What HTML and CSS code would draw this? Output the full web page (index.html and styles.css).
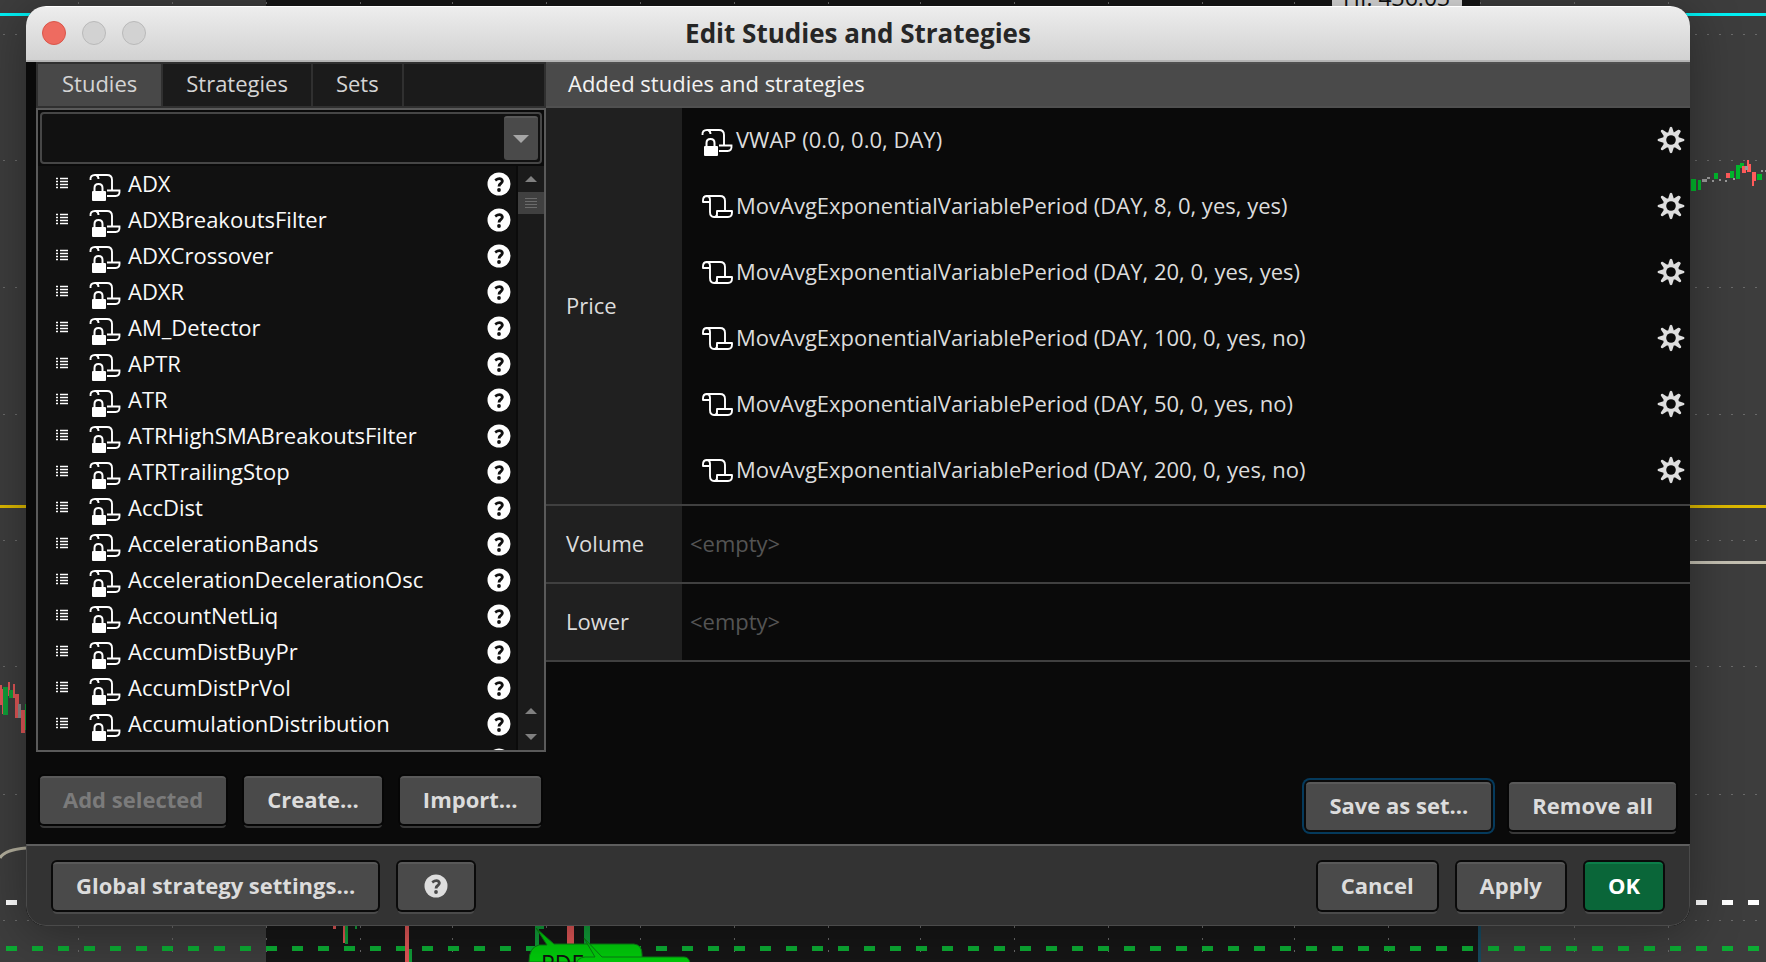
FILE: index.html
```html
<!DOCTYPE html>
<html lang="en">
<head>
<meta charset="utf-8">
<title>Edit Studies and Strategies</title>
<link rel="stylesheet" href="styles.css">
</head>
<body>
<svg class="chart" aria-hidden="true" width="1766" height="962" viewBox="0 0 1766 962">
  <rect width="1766" height="962" fill="#3d3d3d"/>
  <rect x="266" width="1214" height="962" fill="#161616"/>
  <g stroke="#6a6a6a" stroke-width="1" stroke-dasharray="2 10">
    <path d="M2 34.5H1766M2 160.5H1766M2 287.5H1766M2 414.5H1766M2 540.5H1766M2 666.5H1766M2 794.5H1766M2 920.5H1766" stroke-dashoffset="-1"/>
    <path d="M78.500 2V962M172.500 2V962M266.500 2V962M360.500 2V962M452.500 2V962M546.500 2V962M640.500 2V962M734.500 2V962M828.500 2V962M920.500 2V962M1014.500 2V962M1108.500 2V962M1202.500 2V962M1294.500 2V962M1388.500 2V962M1480.500 2V962M1574.500 2V962M1668.500 2V962"/>
  </g>
  <path d="M0 14.500H1766" stroke="#00f0f4" stroke-width="3"/>
  <path d="M0 506.500H1766" stroke="#dcb800" stroke-width="3"/>
  <path d="M1600 562.500H1766" stroke="#c4c0b2" stroke-width="3"/>
  <path d="M0 858Q4 850 26 848" fill="none" stroke="#b4b09e" stroke-width="3"/>
  <path d="M6 902.500H1766" stroke="#fff" stroke-width="5" stroke-dasharray="11 15"/>
  <path d="M6 948.500H1766" stroke="#0cac34" stroke-width="5" stroke-dasharray="11 15"/>
  <path d="M1479.500 926V962" stroke="#174a60" stroke-width="3"/>
  <g fill="#df5656">
    <path d="M0 685h2v20H0zM2 689h3v25H2zM8 682h2v14H8zM13 684h2v10h4v20h2v4h-6v-20h-2zM21 710h4v23h-4zM333 900h3v29h-3zM343 900h2v43h-2zM405 900h4v62h-4zM567 900h7v44h-7z"/>
  </g>
  <g fill="#109c38">
    <path d="M3 687h5v28H3zM9 690h4v8H9zM25 704h2v26h-2zM345 900h3v44h-3zM355 900h2v29h-2zM409 949h3v13h-3zM535 900h4v48h-4zM539 900h5v29h-5zM584 900h6v48h-6z"/>
  </g>
  <path d="M18 704h3v14h-3z" fill="#8a8a8a"/>
  <g fill="#00b82c">
    <path d="M1691 179h5v12h-5zM1698 180h3v10h-3zM1714 173h4v6h-4zM1730 171h4v7h-4zM1736 165h4v14h-4zM1740 163h4v5h-4zM1757 174h5v6h-5z"/>
  </g>
  <g fill="#ff5a5a">
    <path d="M1726 173h4v5h-4zM1742 166h4v7h-4zM1747 160h2v4h2v8h-4zM1752 172h4v9h-2v5h-2z"/>
  </g>
  <g fill="#9a9a9a">
    <path d="M1702 179h5v3h-5zM1707 177h3v2h-3zM1712 180h2v2h-2zM1719 179h2v2h-2zM1725 180h2v2h-2zM1733 178h2v2h-2zM1745 166h3v4h-3zM1761 170h2v2h-2zM1765 170h1v2h-1z"/>
  </g>
  <path d="M536 928l11 17h-8q-10 2-10 17h113v-8q0-9-8-10H554z" fill="#00cc0a" stroke="#0a7a14"/>
  <text class="flag" x="541" y="972">PDF</text>
  <path d="M584 938l11 19h-10q-8 1-8 6h113q-1-6-6-6H602z" fill="#00cc0a" stroke="#0a7a14"/>
  <rect x="1332" y="-30" width="130" height="38" rx="3" fill="#dcdcdc"/>
  <text class="flag" x="1343" y="6">HI: 436.03</text>
</svg>

<svg class="defs" aria-hidden="true" width="0" height="0">
  <symbol id="i-list" viewBox="0 0 12 12">
    <path d="M0 1.500h2M0 4.500h2M0 7.500h2M0 10.500h2M4 1.500h8M4 4.500h8M4 7.500h8M4 10.500h8" stroke="#fff" stroke-width="1.600"/>
  </symbol>
  <symbol id="i-scroll" viewBox="0 0 32 28">
    <path d="M9 8H2V6.500Q2 2 6 2H19Q24 2 24 7V17H31V18.500Q31 23 27 23H13Q9 23 9 18V6Q9 2 5.500 2M16 22.500V17H24M14 23Q16.500 22 16 18" fill="none" stroke="#fff" stroke-width="1.900" stroke-linejoin="round"/>
  </symbol>
  <symbol id="i-locked" viewBox="0 0 32 28">
    <path d="M1.500 7Q1 2 6 2H18Q23 2 23 7V17M7 2Q9.500 3 9.500 6M18 17.500H30.500Q31 23 26.500 23H18" fill="none" stroke="#fff" stroke-width="1.900"/>
    <path d="M5.500 19V15Q5.500 11 9.500 11T13.500 15V19" fill="none" stroke="#fff" stroke-width="2"/>
    <rect x="3" y="18" width="14" height="10" rx="1" fill="#fff"/>
  </symbol>
  <symbol id="i-help" viewBox="0 0 24 24">
    <circle cx="12" cy="12" r="11.500" fill="currentColor"/>
    <path d="M8.200 8.300Q12 5.700 14.400 7.200Q16.400 9 14.300 11Q12 12.500 12 14.500" fill="none" stroke="var(--mark)" stroke-width="2.800"/>
    <circle cx="12" cy="18" r="1.900" fill="var(--mark)"/>
  </symbol>
  <symbol id="i-gear" viewBox="0 0 28 28">
    <path d="M12.800 1.500Q14 0 15.200 1.500L16.800 6.600L21.200 3.800Q23.500 3.500 23.800 5.500L21.400 9.800L21.800 11.300L27 13Q28 14 27 15L21.800 16.700L21.400 18.200L24.200 22.500Q24.500 24.500 22.500 24.200L18.200 21.400L16.800 21.600L15.200 26.500Q14 28 12.800 26.500L11.200 21.600L9.800 21.400L5.500 24.200Q3.500 24.500 3.800 22.500L6.600 18.200L6.400 16.700L1 15Q0 14 1 13L6.400 11.300L6.600 9.800L3.800 5.500Q3.500 3.500 5.500 3.800L9.800 6.600L11.200 6.600Z" fill="#dedede"/>
    <circle cx="14" cy="14" r="4.800" fill="#0a0a0a"/>
  </symbol>
</svg>

<main class="window">
  <header class="titlebar">
    <div class="lights">
      <button class="light close" aria-label="Close"></button>
      <button class="light" aria-label="Minimize"></button>
      <button class="light" aria-label="Zoom"></button>
    </div>
    <h1 class="title">Edit Studies and Strategies</h1>
  </header>

  <div class="body">
    <section class="library">
      <div class="tabs" role="tablist">
        <button class="tab active" role="tab" aria-selected="true">Studies</button>
        <button class="tab" role="tab" aria-selected="false">Strategies</button>
        <button class="tab" role="tab" aria-selected="false">Sets</button>
      </div>
      <div class="panel">
        <div class="combo">
          <input class="search" type="text" aria-label="Search studies">
          <button class="drop" aria-label="Show search history"><svg width="16" height="8" viewBox="0 0 16 8"><path d="M0 0H16L8 8Z" fill="#a6a6a6"/></svg></button>
        </div>
        <div class="browser">
          <ul class="studies" id="studies"></ul>
          <div class="scrollbar" aria-hidden="true">
            <svg class="arrow" width="12" height="6" viewBox="0 0 12 6"><path d="M0 6H12L6 0Z"/></svg>
            <div class="thumb"><svg width="12" height="12" viewBox="0 0 12 12"><path d="M0 1.500H12M0 4.500H12M0 7.500H12M0 10.500H12" stroke="#6c6c6c"/></svg></div>
            <div class="track"></div>
            <svg class="arrow" width="12" height="6" viewBox="0 0 12 6"><path d="M0 6H12L6 0Z"/></svg>
            <svg class="arrow" width="12" height="6" viewBox="0 0 12 6"><path d="M0 0H12L6 6Z"/></svg>
          </div>
        </div>
      </div>
      <div class="actions">
        <button class="btn" disabled>Add selected</button>
        <button class="btn">Create...</button>
        <button class="btn">Import...</button>
      </div>
    </section>

    <section class="added">
      <h2 class="heading">Added studies and strategies</h2>
      <div class="group">
        <h3 class="label">Price</h3>
        <ul class="entries" id="entries"></ul>
      </div>
      <div class="group">
        <h3 class="label">Volume</h3>
        <p class="empty">&lt;empty&gt;</p>
      </div>
      <div class="group">
        <h3 class="label">Lower</h3>
        <p class="empty">&lt;empty&gt;</p>
      </div>
      <div class="actions end">
        <button class="btn focused">Save as set...</button>
        <button class="btn">Remove all</button>
      </div>
    </section>
  </div>

  <footer class="footer">
    <button class="btn framed">Global strategy settings...</button>
    <button class="btn framed help-btn" aria-label="Help"><svg class="help" width="24" height="24"><use href="#i-help"/></svg></button>
    <span class="spacer"></span>
    <button class="btn framed">Cancel</button>
    <button class="btn framed">Apply</button>
    <button class="btn framed ok">OK</button>
  </footer>
</main>
<script src="app.js"></script>
</body>
</html>
```

FILE: styles.css
```css
* { box-sizing: border-box; }

body {
  margin: 0;
  height: 100vh;
  padding: 6px 76px 36px 26px;
  display: flex;
  overflow: hidden;
  background: #3d3d3d;
  color: #dcdcdc;
  font: 22px/30px "Open Sans", "Noto Sans", sans-serif;
}

button, input { font: inherit; color: inherit; }
button { border: 0; margin: 0; }
h1, h2, h3, p, ul { margin: 0; padding: 0; font: inherit; }
ul { list-style: none; }
svg { display: block; flex: none; }

.chart { position: absolute; left: 0; top: 0; }
.defs { position: absolute; }
.flag { font-size: 23px; fill: #111; }

.window {
  position: relative;
  flex: 1;
  min-width: 0;
  display: flex;
  flex-direction: column;
  overflow: hidden;
  border-radius: 20px;
  background: #0a0a0a;
  box-shadow: 0 6px 50px rgba(0, 0, 0, .35);
}

.titlebar {
  display: grid;
  grid-template-columns: 1fr auto 1fr;
  align-items: center;
  flex: none;
  height: 56px;
  padding: 0 16px 2px;
  background: linear-gradient(#ededed, #d2d2d2);
  border-bottom: 2px solid #b4b4b4;
  border-top: 1px solid #fff;
}
.lights { display: flex; gap: 16px; }
.light {
  width: 24px;
  height: 24px;
  padding: 0;
  border: 1px solid #b9b9b9;
  border-radius: 50%;
  background: #d2d2d2;
}
.close { background: #ee6b60; border-color: #d95549; }
.title { color: #262626; font-size: 26px; font-weight: 700; }

.body { flex: 1; display: flex; min-height: 0; }

.library {
  width: 520px;
  flex: none;
  padding-left: 10px;
  display: flex;
  flex-direction: column;
}
.tabs {
  display: flex;
  flex: none;
  height: 46px;
  border: 2px solid #303030;
  background: #1b1b1b;
}
.tab {
  padding: 0 23px 4px;
  border-right: 2px solid #303030;
  background: #1b1b1b;
  color: #d4d4d4;
}
.tab.active { padding: 0 24px 4px; background: #484848; }

.panel {
  flex: 1;
  min-height: 0;
  display: flex;
  flex-direction: column;
  border: 2px solid #5a5a5a;
  background: #0a0a0a;
}
.combo {
  display: flex;
  flex: none;
  height: 52px;
  margin: 2px;
  padding: 2px;
  border: 2px solid #464646;
  border-radius: 4px;
  background: #111;
}
.search { flex: 1; min-width: 0; border: 0; padding: 0 8px; background: none; outline: none; }
.drop {
  width: 34px;
  padding: 0;
  display: grid;
  place-items: center;
  border-top: 2px solid #595959;
  border-radius: 3px;
  background: #4a4a4a;
}
.browser { flex: 1; min-height: 0; display: flex; background: #111; }
.studies { flex: 1; min-width: 0; overflow: hidden; border-right: 2px solid #0b0b0b; }
.study {
  display: flex;
  align-items: center;
  height: 36px;
  padding: 0 5px 2px 18px;
  color: #fafafa;
}
.study .kind { margin: 8px 7px 0 21px; }
.study .name { flex: 1; }
.info { padding: 2px 0 0; background: none; color: #fff; --mark: #111; }
.help { --mark: #4a4a4a; color: #dedede; }

.scrollbar {
  width: 26px;
  padding: 10px 0;
  display: flex;
  flex-direction: column;
  align-items: center;
  gap: 10px;
  background: #1b1b1b;
}
.arrow { fill: #808080; }
.arrow:last-child { margin-top: 10px; }
.thumb {
  width: 100%;
  height: 22px;
  display: grid;
  place-items: center;
  background: #404040;
}
.track { flex: 1; }

.actions { display: flex; flex: none; gap: 18px; padding: 24px 8px 20px 4px; }
.actions.end { margin-top: auto; justify-content: flex-end; padding: 0 14px 14px; }

.btn {
  height: 48px;
  padding: 0 23px 4px;
  border-top: 2px solid #595959;
  border-radius: 4px;
  background: #4a4a4a;
  box-shadow: 0 0 0 2px #060606, 0 4px 0 0 #383838;
  font-weight: 700;
  white-space: nowrap;
}
.btn:disabled { color: #7b7b7b; }
.btn.focused { box-shadow: 0 0 0 2px #0a0a0a, 0 0 0 4px #053a5c; }
.btn.framed { box-shadow: 0 0 0 2px #0a0a0a, 0 4px 0 0 #4a4a4a; }
.btn.ok { background: #0a6639; border-top-color: #0c7d49; color: #fff; }
.btn.help-btn { padding: 0 26px 2px; }

.added { flex: 1; min-width: 0; display: flex; flex-direction: column; }
.heading {
  height: 46px;
  padding: 4px 22px;
  background: #4a4a4a;
  border: solid #505050;
  border-width: 2px 0;
  color: #f2f2f2;
}
.group { display: flex; min-height: 78px; border-bottom: 2px solid #404040; }
.label {
  width: 136px;
  padding: 0 0 2px 20px;
  display: flex;
  align-items: center;
  background: #202020;
}
.entries { flex: 1; }
.entry { display: flex; align-items: center; height: 66px; padding: 0 5px 4px 19px; }
.entry .kind { margin: 6px 3px 0 0; }
.entry .name { flex: 1; }
.gear { padding: 2px 0 0; background: none; }
.empty { align-self: center; padding: 0 0 2px 8px; color: #545454; }

.footer {
  display: flex;
  flex: none;
  align-items: center;
  gap: 20px;
  height: 82px;
  padding: 0 26px;
  border: 1px solid #4a4a4a;
  border-top: 2px solid #5e5e5e;
  border-radius: 0 0 20px 20px;
  background: #333;
}
.spacer { flex: 1; }
```

FILE: app.js
```js
const icon = (id, w, h, cls) =>
  `<svg class="${cls}" width="${w}" height="${h}" aria-hidden="true"><use href="#${id}"/></svg>`;

const studies = [
  "ADX", "ADXBreakoutsFilter", "ADXCrossover", "ADXR", "AM_Detector", "APTR", "ATR",
  "ATRHighSMABreakoutsFilter", "ATRTrailingStop", "AccDist", "AccelerationBands",
  "AccelerationDecelerationOsc", "AccountNetLiq", "AccumDistBuyPr", "AccumDistPrVol",
  "AccumulationDistribution"
];
document.getElementById("studies").innerHTML = studies.map(name => `
  <li class="study">${icon("i-list", 12, 12, "grip")}${icon("i-locked", 32, 28, "kind")}
    <span class="name">${name}</span>
    <button class="info" aria-label="About ${name}">${icon("i-help", 24, 24, "")}</button>
  </li>`).join("") + `
  <li class="study"><span class="name"></span>
    <button class="info" aria-label="About the next study">${icon("i-help", 24, 24, "")}</button>
  </li>`;

const entries = [
  ["VWAP (0.0, 0.0, DAY)", "i-locked"],
  ["MovAvgExponentialVariablePeriod (DAY, 8, 0, yes, yes)", "i-scroll"],
  ["MovAvgExponentialVariablePeriod (DAY, 20, 0, yes, yes)", "i-scroll"],
  ["MovAvgExponentialVariablePeriod (DAY, 100, 0, yes, no)", "i-scroll"],
  ["MovAvgExponentialVariablePeriod (DAY, 50, 0, yes, no)", "i-scroll"],
  ["MovAvgExponentialVariablePeriod (DAY, 200, 0, yes, no)", "i-scroll"]
];
document.getElementById("entries").innerHTML = entries.map(([name, kind]) => `
  <li class="entry">${icon(kind, 32, 28, "kind")}
    <span class="name">${name}</span>
    <button class="gear" aria-label="Settings for ${name}">${icon("i-gear", 28, 28, "")}</button>
  </li>`).join("");
```
